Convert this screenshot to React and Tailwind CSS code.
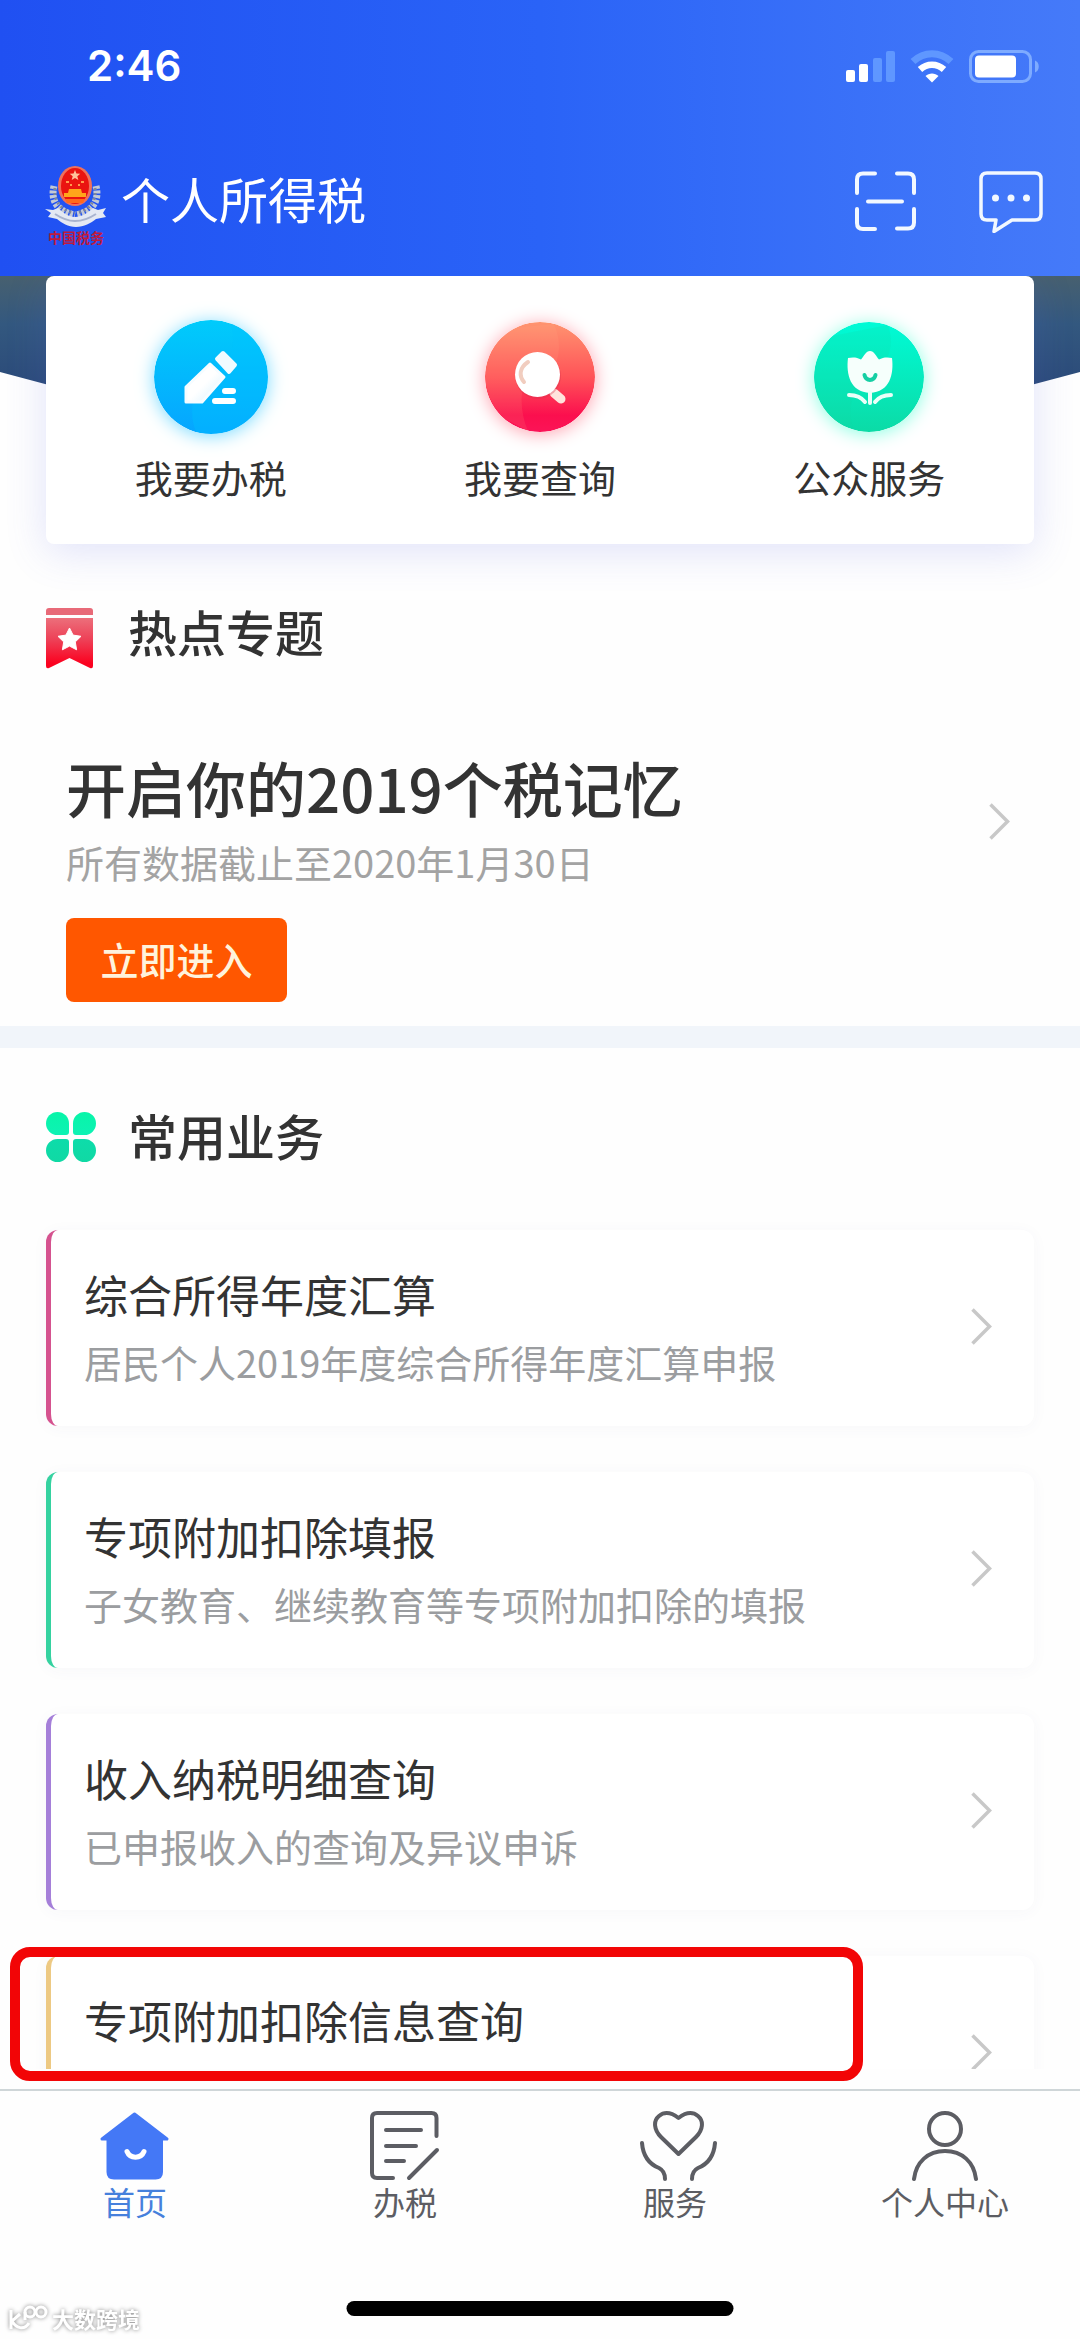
import React, { useState } from "react";

const StatusBar = () => (
  <div className="flex h-[132px] items-center justify-between pl-[87px] pr-10">
    <time className="font-['Inter',sans-serif] text-[42px] font-semibold leading-none">2:46</time>
    <div className="flex items-center gap-[15px]">
      <svg width="50" height="33" viewBox="0 0 50 33" fill="#fff" aria-hidden="true">
        <rect x="1" y="20" width="9" height="12" rx="2" />
        <rect x="14" y="14" width="9" height="18" rx="2" />
        <rect x="28" y="8" width="9" height="24" rx="2" fill="#5f97ff" />
        <rect x="41" y="1" width="9" height="31" rx="2" fill="#5f97ff" />
      </svg>
      <svg width="44" height="33" viewBox="0 0 44 33" fill="none" aria-hidden="true">
        <path d="M3 11.500C14 1 30 1 41 11.500" stroke="#5f97ff" strokeWidth="7" />
        <path d="M10 19.500C17 13 27 13 34 19.500" stroke="#fff" strokeWidth="6.500" />
        <path d="M22 32.500L15.500 26C19 22.500 25 22.500 28.500 26Z" fill="#fff" />
      </svg>
      <svg width="71" height="33" viewBox="0 0 71 33" fill="none" aria-hidden="true">
        <rect x="1.500" y="1.500" width="60" height="30" rx="8" stroke="#7eabff" strokeWidth="3" />
        <rect x="6" y="5.500" width="41" height="22" rx="4" fill="#fff" />
        <path d="M66 10.500C71 12 71 21 66 22.500Z" fill="#7eabff" />
      </svg>
    </div>
  </div>
);

const Emblem = () => (
  <div className="flex w-[62px] flex-col items-center pt-2">
    <svg width="62" height="62" viewBox="0 0 62 62" aria-hidden="true">
      <g fill="none" stroke="#c3c9d6" strokeWidth="7" strokeDasharray="3 1.500">
        <path d="M9 20C5 36 14 46 30 49" />
        <path d="M51 20C55 36 46 46 31 49" />
      </g>
      <g fill="none" stroke="#7d869c" strokeWidth="3" strokeDasharray="2 3">
        <path d="M10 22C8 34 16 45 30 47" />
        <path d="M50 22C52 34 44 45 31 47" />
      </g>
      <ellipse cx="30" cy="20" rx="17" ry="20" fill="#f0705a" />
      <ellipse cx="30" cy="20" rx="14" ry="18" fill="#ea1410" />
      <path d="M30 4l1.400 3.600 3.900.2-3 2.400 1 3.800-3.300-2.100-3.300 2.100 1-3.800-3-2.400 3.900-.2z" fill="#ffc29a" />
      <path d="M21 16h3M36 16h3M25 19h2M33 19h2" stroke="#ff9a4d" strokeWidth="2" />
      <path d="M24 23h12l1 4h4v4H19v-4h4z" fill="#ffa61a" />
      <path d="M20 33h20l-2 4H22z" fill="#ff6a1a" />
      <path d="M0 43l8 1 5-2c5 5 11 9 17 9s13-4 18-9l5 2 8-2-3 5 3 4-10 2c-5 4-12 8-20 8s-14-4-19-8l-9-2 3-4z" fill="#e4e9f3" />
      <path d="M10 48c6 4 12 7 20 7s15-3 21-7" fill="none" stroke="#a9b4cf" strokeWidth="2" />
    </svg>
    <span className="whitespace-nowrap text-[14px] font-bold leading-[18px] text-[#c01a3c]">中国税务</span>
  </div>
);

const TaxIcon = () => (
  <svg width="114" height="114" viewBox="0 0 114 114" className="rounded-full shadow-[0_2px_18px_#7ddcff]" aria-hidden="true">
    <defs>
      <linearGradient id="tax" x1="0" y1="0" x2="0" y2="1">
        <stop offset="0" stopColor="#00cbfb" />
        <stop offset="1" stopColor="#06a5ff" />
      </linearGradient>
      <linearGradient id="pen" x1="0" y1="0" x2="1" y2="1">
        <stop offset="0.500" stopColor="#fff" />
        <stop offset="1" stopColor="#d3effe" />
      </linearGradient>
    </defs>
    <circle cx="57" cy="57" r="57" fill="url(#tax)" />
    <path d="M76 3C84 26 76 48 57 57S34 92 42 112A57 57 0 0 0 76 3Z" fill="#00c2ff" opacity="0.350" />
    <path d="M69 33L81 45 75 52 63 39Z" fill="#f2fbff" stroke="#f2fbff" strokeWidth="4" strokeLinejoin="round" />
    <path d="M56 44L70 57 48 82H32V67Z" fill="url(#pen)" stroke="#f6fcff" strokeWidth="3" strokeLinejoin="round" />
    <path d="M71 71H79M61 81H79" stroke="#fff" strokeWidth="6" strokeLinecap="round" />
  </svg>
);

const SearchIcon = () => (
  <svg width="110" height="110" viewBox="2 2 110 110" className="rounded-full shadow-[0_2px_18px_#ffa3b0]" aria-hidden="true">
    <defs>
      <linearGradient id="find" x1="0" y1="0" x2="0" y2="1">
        <stop offset="0" stopColor="#ff9470" />
        <stop offset="0.500" stopColor="#ff5358" />
        <stop offset="0.850" stopColor="#fb0f4e" />
        <stop offset="1" stopColor="#fb1457" />
      </linearGradient>
    </defs>
    <circle cx="57" cy="57" r="55" fill="url(#find)" />
    <path d="M71 4C79 22 77 40 68 51L45 57C36 70 37 92 45 111L20 98C-6 70 -4 30 30 8Z" fill="#ffb48c" opacity="0.120" />
    <path d="M71 73L78 79" stroke="#ffe3dc" strokeWidth="9" strokeLinecap="round" />
    <circle cx="55" cy="56" r="23" fill="#d8324a" opacity="0.350" />
    <circle cx="54.500" cy="54.500" r="22.500" fill="#fff" />
    <path d="M45 42C36 48 36 56 41 62" fill="none" stroke="#f1cdbf" strokeWidth="4" strokeLinecap="round" />
  </svg>
);

const FlowerIcon = () => (
  <svg width="110" height="110" viewBox="2 2 110 110" className="rounded-full shadow-[0_2px_18px_#8dffe3]" aria-hidden="true">
    <defs>
      <linearGradient id="flower" x1="0" y1="0" x2="0" y2="1">
        <stop offset="0" stopColor="#00fbd6" />
        <stop offset="1" stopColor="#0bdba6" />
      </linearGradient>
    </defs>
    <circle cx="57" cy="57" r="55" fill="url(#flower)" />
    <path d="M76 5C84 28 74 48 57 57S34 92 42 110A55 55 0 0 1 20 16Z" fill="#12d8a4" opacity="0.200" />
    <path d="M58 31C62 31 64 36 67 39.500C71 37 76 37 80 38C82 54 78 72 58 73C38 72 34 54 36 38C40 37 45 37 49 39.500C52 36 54 31 58 31Z" fill="#f6fffc" />
    <path d="M52.500 55C54 61.500 62 61.500 63.500 55" fill="none" stroke="#16cfa4" strokeWidth="4" strokeLinecap="round" />
    <path d="M58 72V83M37 75C45 75 50 78 53 82M79 75C71 75 66 78 63 82" fill="none" stroke="#eafff9" strokeWidth="4" strokeLinecap="round" />
  </svg>
);

const HotIcon = () => (
  <svg width="48" height="61" viewBox="0 0 48 61" aria-hidden="true">
    <defs>
      <linearGradient id="hot" x1="0" y1="0" x2="0" y2="1">
        <stop offset="0" stopColor="#ec6f7b" />
        <stop offset="0.450" stopColor="#ee3e55" />
        <stop offset="0.900" stopColor="#fb0220" />
      </linearGradient>
    </defs>
    <path d="M3 0H44Q47 0 47 3V7H0V3Q0 0 3 0Z" fill="#e86a78" />
    <path d="M0 10H47V58Q47 61 44 60L23.500 50 3 60Q0 61 0 58Z" fill="url(#hot)" />
    <path d="M23.500 20l3.600 7.100 7.900 1.200-5.700 5.600 1.300 7.900-7.100-3.700-7.100 3.700 1.300-7.900-5.700-5.600 7.900-1.200z" fill="#fff" stroke="#fff" strokeLinejoin="round" />
  </svg>
);

const CloverIcon = () => (
  <svg width="50" height="50" viewBox="0 0 50 50" aria-hidden="true">
    <defs>
      <linearGradient id="clover" gradientUnits="userSpaceOnUse" x1="0" y1="0" x2="0" y2="50">
        <stop offset="0" stopColor="#08f5a8" />
        <stop offset="0.450" stopColor="#0df2b4" />
        <stop offset="0.550" stopColor="#0ddcaa" />
        <stop offset="1" stopColor="#10d9a4" />
      </linearGradient>
    </defs>
    <g fill="url(#clover)">
      <path d="M11.500 0A11.500 11.500 0 0 1 23 11.500V20Q23 23 20 23H11.500A11.500 11.500 0 0 1 11.500 0Z" />
      <path d="M38.500 0A11.500 11.500 0 0 0 27 11.500V20Q27 23 30 23H38.500A11.500 11.500 0 0 0 38.500 0Z" />
      <path d="M11.500 50A11.500 11.500 0 0 0 23 38.500V30Q23 27 20 27H11.500A11.500 11.500 0 0 0 11.500 50Z" />
      <path d="M38.500 50A11.500 11.500 0 0 1 27 38.500V30Q27 27 30 27H38.500A11.500 11.500 0 0 1 38.500 50Z" />
    </g>
  </svg>
);

const Chevron = () => (
  <svg width="21" height="37" viewBox="0 0 21 37" fill="none" stroke="#c8c8c8" strokeWidth="3.500" className="shrink-0" aria-hidden="true">
    <path d="M1.500 1.500L18.500 18.500 1.500 35.500" />
  </svg>
);

const HomeTab = () => (
  <svg width="70" height="70" viewBox="0 0 70 70" aria-hidden="true">
    <path d="M34.500 3L67 28H61.500V61Q61.500 67 55.500 67H14Q8 67 8 61V28H2Z" fill="#4478f6" stroke="#4478f6" strokeWidth="3" strokeLinejoin="round" />
    <path d="M27 40.500C30 48 41 48 44 40.500" fill="none" stroke="#fff" strokeWidth="5" strokeLinecap="round" />
  </svg>
);

const TaxTab = () => (
  <svg width="70" height="70" viewBox="0 0 70 70" fill="none" stroke="#5c5d63" strokeWidth="4" strokeLinecap="round" aria-hidden="true">
    <path d="M66.500 25V7Q66.500 2 61.500 2H7Q2 2 2 7V62Q2 67 7 67H23" />
    <path d="M16 19H51M16 35H46M16 50H34M39 67L67 39" />
  </svg>
);

const ServiceTab = () => (
  <svg width="83" height="70" viewBox="-6 0 83 70" fill="none" stroke="#5c5d63" strokeWidth="4" strokeLinecap="round" strokeLinejoin="round" aria-hidden="true">
    <path d="M38.500 43L21 26C14 19 13 10 19 5C25 0 32 2 38.500 7C45 2 52 0 58 5C64 10 63 19 56 26Z" />
    <path d="M2 32C3 45 9 53 19 57Q25 60 25 68M75 32C74 45 68 53 58 57Q52 60 52 68" />
  </svg>
);

const UserTab = () => (
  <svg width="66" height="70" viewBox="0 0 66 70" fill="none" stroke="#5c5d63" strokeWidth="4" strokeLinecap="round" aria-hidden="true">
    <circle cx="33" cy="18" r="16" />
    <path d="M2 68C4 51 16 40 33 40S62 51 64 68" />
  </svg>
);

const entries = [
  { label: "我要办税", icon: <TaxIcon /> },
  { label: "我要查询", icon: <SearchIcon /> },
  { label: "公众服务", icon: <FlowerIcon /> },
];

const services = [
  { title: "综合所得年度汇算", desc: "居民个人2019年度综合所得年度汇算申报", border: "border-[#d5528f]" },
  { title: "专项附加扣除填报", desc: "子女教育、继续教育等专项附加扣除的填报", border: "border-[#35d2a0]" },
  { title: "收入纳税明细查询", desc: "已申报收入的查询及异议申诉", border: "border-[#a57fd9]" },
  { title: "专项附加扣除信息查询", border: "border-[#edc983]" },
];

const tabs = [
  { label: "首页", icon: <HomeTab /> },
  { label: "办税", icon: <TaxTab /> },
  { label: "服务", icon: <ServiceTab /> },
  { label: "个人中心", icon: <UserTab /> },
];

const App = () => {
  const [active, setActive] = useState("首页");

  return (
    <div className="flex h-screen flex-col overflow-hidden bg-[#fefefe] font-['Noto_Sans_CJK_SC',sans-serif] text-[#333]">
      <header className="shrink-0 bg-linear-to-r from-[#2050f2] via-[#2a63f7] to-[#457af9] pb-1 text-white">
        <StatusBar />
        <div className="flex h-[140px] items-center justify-between pl-[45px] pr-[37px]">
          <div className="flex items-center gap-[14px]">
            <Emblem />
            <h1 className="pb-2 text-[49px] leading-[60px]">个人所得税</h1>
          </div>
          <div className="flex items-center gap-[62px]">
            <button type="button" aria-label="扫一扫">
              <svg width="62" height="62" viewBox="0 0 62 62" fill="none" stroke="#f2f8ff" strokeWidth="4" strokeLinecap="round">
                <path d="M20 2.500H8Q2 2.500 2 8.500V22M42 2.500H53Q59 2.500 59 8.500V22M2 38V52Q2 58 8 58H20M42 57.500H53Q59 57.500 59 51.500V38M13 30.500H47" />
              </svg>
            </button>
            <button type="button" aria-label="消息">
              <svg width="64" height="62" viewBox="0 0 64 62" fill="none" stroke="#f2f8ff" strokeWidth="3.500" strokeLinejoin="round">
                <path d="M8 2H56Q62 2 62 8V43Q62 49 56 49H33L15 60.500 17 49H8Q2 49 2 43V8Q2 2 8 2Z" />
                <g fill="#f2f8ff" stroke="none">
                  <circle cx="16.500" cy="27" r="3.500" />
                  <circle cx="32" cy="27" r="3.500" />
                  <circle cx="47.500" cy="27" r="3.500" />
                </g>
              </svg>
            </button>
          </div>
        </div>
      </header>

      <div className="relative min-h-0 flex-1 pb-5">
        <main className="h-full overflow-hidden">
          {/* quick entries, over the lower edge of the banner */}
          <section className="relative px-[46px]">
            <div className="absolute inset-x-0 top-0 h-[240px] bg-linear-to-b from-[#47606f] via-[#33587f] via-20% to-[#2a4878] to-50% [clip-path:polygon(0_0,100%_0,100%_40%,50%_100%,0_40%)]" />
            <div className="relative grid h-[268px] grid-cols-3 rounded-lg bg-white shadow-[0_8px_40px_rgba(90,100,230,0.18)]">
              {entries.map((item) => (
                <button key={item.label} type="button" className="flex flex-col items-center pt-11">
                  <span className="flex h-[114px] items-center">{item.icon}</span>
                  <span className="mt-[15px] text-[38px] leading-[56px]">{item.label}</span>
                </button>
              ))}
            </div>
          </section>

          <section className="pt-16">
            <div className="flex h-[61px] items-center gap-[34px] px-[46px]">
              <HotIcon />
              <h2 className="pb-4 text-[49px] font-medium leading-[60px]">热点专题</h2>
            </div>
            <article className="mt-[86px] pb-6 pl-[66px] pr-[70px]">
              <div className="flex items-center justify-between">
                <div>
                  <h3 className="text-[60px] font-medium leading-[64px]">开启你的2019个税记忆</h3>
                  <p className="mt-[17px] text-[38px] leading-[52px] text-[#a3a3a3]">所有数据截止至2020年1月30日</p>
                </div>
                <Chevron />
              </div>
              <button type="button" className="mt-[30px] h-[84px] w-[221px] rounded-lg bg-[#ff5700] pb-1 text-[38px] font-medium text-[#fff3dc]">
                立即进入
              </button>
            </article>
          </section>

          <div className="h-[22px] bg-[#f1f5fa]" />

          <section className="px-[46px] pt-16">
            <div className="flex h-[50px] items-center gap-8">
              <CloverIcon />
              <h2 className="pb-1 text-[49px] font-medium leading-[60px]">常用业务</h2>
            </div>
            <ul className="mt-[68px] flex flex-col gap-[46px]">
              {services.map((item) => (
                <li key={item.title}>
                  <a
                    href="#"
                    className={`flex items-center justify-between rounded-[12px] border-l-[5px] bg-white pb-[38px] pl-[33px] pr-[42px] pt-[34px] shadow-[0_2px_16px_rgba(70,80,120,0.04)] ${item.border}`}
                  >
                    <span className="flex min-h-[124px] flex-col gap-3">
                      <span className="text-[44px] leading-[60px]">{item.title}</span>
                      {item.desc && <span className="text-[38px] leading-[52px] text-[#9b9da0]">{item.desc}</span>}
                    </span>
                    <Chevron />
                  </a>
                </li>
              ))}
            </ul>
          </section>
        </main>
        {/* highlight frame */}
        <div className="pointer-events-none absolute bottom-2 left-[10px] h-[134px] w-[79%] rounded-[20px] border-[10px] border-[#f20506]" />
      </div>

      <footer className="relative h-[250px] shrink-0 border-t-2 border-[#cfd6d8]">
        <nav className="grid grid-cols-4">
          {tabs.map((tab) => (
            <button
              key={tab.label}
              type="button"
              onClick={() => setActive(tab.label)}
              className={`flex flex-col items-center pt-5 ${active === tab.label ? "text-[#4680dc]" : "text-[#5c5d63]"}`}
            >
              {tab.icon}
              <span className="text-[32px] leading-10">{tab.label}</span>
            </button>
          ))}
        </nav>
        <div className="absolute bottom-[23px] left-1/2 h-[15px] w-[387px] -translate-x-1/2 rounded-full bg-black" />
        <div className="absolute bottom-1.5 left-2 flex items-center gap-1 text-white drop-shadow-[0_0_2px_#888]">
          <svg width="40" height="28" viewBox="0 0 40 28" fill="none" stroke="currentColor" strokeWidth="3" aria-hidden="true">
            <path d="M3 6V25M12 10L4 17C8 24 16 27 21 19" />
            <circle cx="22" cy="8" r="5" />
            <circle cx="33" cy="8" r="5" />
            <path d="M17 8V16" />
          </svg>
          <span className="text-[22px] font-bold leading-[30px]">大数跨境</span>
        </div>
      </footer>
    </div>
  );
};

export default App;
